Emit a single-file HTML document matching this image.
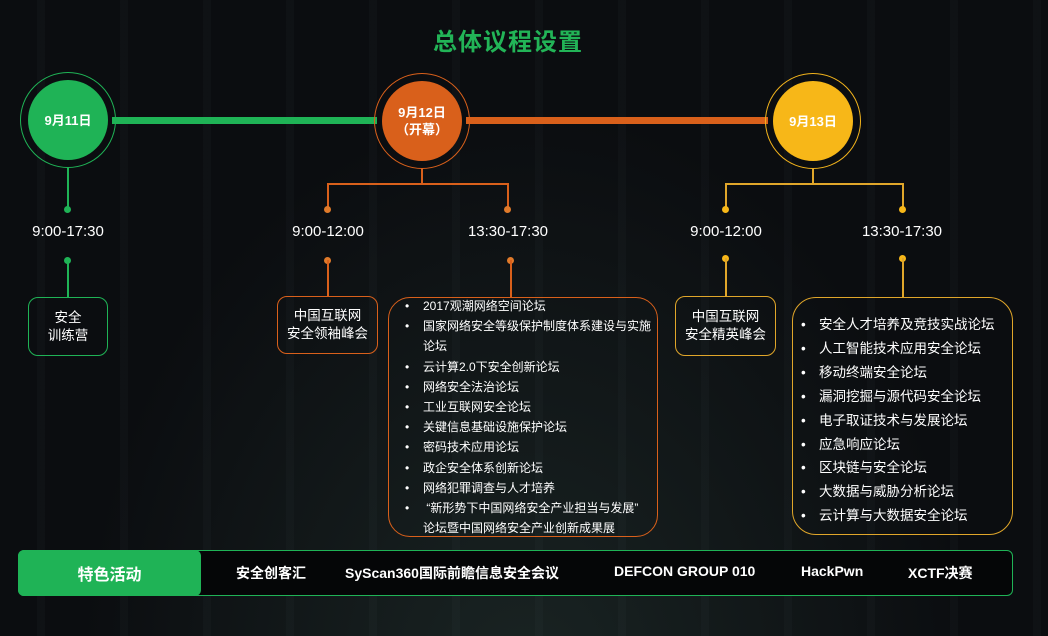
<!DOCTYPE html>
<html><head><meta charset="utf-8"><style>
*{margin:0;padding:0;box-sizing:border-box}
body{width:1048px;height:636px;overflow:hidden;background:#0b0d10;font-family:"Liberation Sans","Noto Sans CJK SC",sans-serif;color:#fff;position:relative}
.bg{position:absolute;inset:0;background:
repeating-linear-gradient(90deg,rgba(255,255,255,0.0) 0 37px,rgba(120,140,150,0.035) 37px 45px,rgba(255,255,255,0) 45px 83px),
radial-gradient(ellipse at 50% 110%,rgba(60,90,80,0.3),rgba(0,0,0,0) 60%),#0b0d10}
.a{position:absolute}
.title{left:0;width:1016px;top:22px;text-align:center;font-size:24px;font-weight:bold;color:#22b457;letter-spacing:1px}
.circ{position:absolute;border-radius:50%;display:flex;align-items:center;justify-content:center;text-align:center;font-weight:bold;font-size:13px;line-height:17px}
.ring{position:absolute;border-radius:50%;border:1.5px solid}
.t{position:absolute;font-size:15px;width:120px;text-align:center}
.box{position:absolute;border:1.5px solid;border-radius:10px;font-size:13.5px;line-height:18px;text-align:center;display:flex;align-items:center;justify-content:center}
.dot{position:absolute;width:7px;height:7px;border-radius:50%}
ul{list-style:none}
li{position:relative;padding-left:26px}
li:before{content:"•";position:absolute;left:8px}
.ob li{padding-left:34px}
.ob li:before{left:16px}
</style></head><body><div class="bg"></div>
<div class="a title">总体议程设置</div>

<div class="a" style="left:112px;top:117px;width:265px;height:7px;background:#1fb356"></div>
<div class="a" style="left:466px;top:117px;width:302px;height:7px;background:#d9601b"></div>

<div class="ring" style="left:20px;top:72px;width:96px;height:96px;border-color:#1fb356"></div>
<div class="circ" style="left:28px;top:80px;width:80px;height:80px;background:#1fb356">9月11日</div>
<div class="ring" style="left:374px;top:73px;width:96px;height:96px;border-color:#d9601b"></div>
<div class="circ" style="left:382px;top:81px;width:80px;height:80px;background:#d9601b">9月12日<br>（开幕）</div>
<div class="ring" style="left:765px;top:73px;width:96px;height:96px;border-color:#f2b31c"></div>
<div class="circ" style="left:773px;top:81px;width:80px;height:80px;background:#f7b718">9月13日</div>

<div class="a" style="left:67px;top:168px;width:1.5px;height:42px;background:#1fb356"></div>
<div class="dot" style="left:64px;top:206px;background:#1fb356"></div>
<div class="t" style="left:8px;top:223px">9:00-17:30</div>
<div class="dot" style="left:64px;top:257px;background:#1fb356"></div>
<div class="a" style="left:67px;top:260px;width:1.5px;height:37px;background:#1fb356"></div>
<div class="box" style="left:28px;top:297px;width:80px;height:59px;border-color:#1fb356">安全<br>训练营</div>

<div class="a" style="left:421px;top:168px;width:1.5px;height:16px;background:#d9601b"></div>
<div class="a" style="left:327px;top:183px;width:181px;height:1.5px;background:#d9601b"></div>
<div class="a" style="left:327px;top:183px;width:1.5px;height:26px;background:#d9601b"></div>
<div class="a" style="left:507px;top:183px;width:1.5px;height:26px;background:#d9601b"></div>
<div class="dot" style="left:324px;top:206px;background:#e07a2a"></div>
<div class="dot" style="left:504px;top:206px;background:#e07a2a"></div>
<div class="t" style="left:268px;top:223px">9:00-12:00</div>
<div class="t" style="left:448px;top:223px">13:30-17:30</div>
<div class="dot" style="left:324px;top:257px;background:#e07a2a"></div>
<div class="dot" style="left:507px;top:257px;background:#e07a2a"></div>
<div class="a" style="left:327px;top:260px;width:1.5px;height:36px;background:#d9601b"></div>
<div class="a" style="left:510px;top:260px;width:1.5px;height:37px;background:#d9601b"></div>
<div class="box" style="left:277px;top:296px;width:101px;height:58px;border-color:#d9601b">中国互联网<br>安全领袖峰会</div>
<div class="box ob" style="left:388px;top:297px;width:270px;height:240px;border-color:#d9601b;border-radius:22px;display:block;text-align:left;font-size:12px;line-height:20.2px;white-space:nowrap">
<ul style="margin-top:-2px">
<li>2017观潮网络空间论坛</li>
<li>国家网络安全等级保护制度体系建设与实施<br>论坛</li>
<li>云计算2.0下安全创新论坛</li>
<li>网络安全法治论坛</li>
<li>工业互联网安全论坛</li>
<li>关键信息基础设施保护论坛</li>
<li>密码技术应用论坛</li>
<li>政企安全体系创新论坛</li>
<li>网络犯罪调查与人才培养</li>
<li>&nbsp;“新形势下中国网络安全产业担当与发展”<br>论坛暨中国网络安全产业创新成果展</li>
</ul></div>

<div class="a" style="left:812px;top:168px;width:1.5px;height:16px;background:#e0a62a"></div>
<div class="a" style="left:725px;top:183px;width:178px;height:1.5px;background:#e0a62a"></div>
<div class="a" style="left:725px;top:183px;width:1.5px;height:26px;background:#e0a62a"></div>
<div class="a" style="left:902px;top:183px;width:1.5px;height:26px;background:#e0a62a"></div>
<div class="dot" style="left:722px;top:206px;background:#f7b718"></div>
<div class="dot" style="left:899px;top:206px;background:#f7b718"></div>
<div class="t" style="left:666px;top:223px">9:00-12:00</div>
<div class="t" style="left:842px;top:223px">13:30-17:30</div>
<div class="dot" style="left:722px;top:255px;background:#f7b718"></div>
<div class="dot" style="left:899px;top:255px;background:#f7b718"></div>
<div class="a" style="left:725px;top:258px;width:1.5px;height:38px;background:#e0a62a"></div>
<div class="a" style="left:902px;top:258px;width:1.5px;height:39px;background:#e0a62a"></div>
<div class="box" style="left:675px;top:296px;width:101px;height:60px;border-color:#e0a62a">中国互联网<br>安全精英峰会</div>
<div class="box" style="left:792px;top:297px;width:221px;height:238px;border-color:#e0a62a;border-radius:24px;display:block;text-align:left;font-size:13.5px;line-height:23.9px;padding-top:15px">
<ul>
<li>安全人才培养及竞技实战论坛</li>
<li>人工智能技术应用安全论坛</li>
<li>移动终端安全论坛</li>
<li>漏洞挖掘与源代码安全论坛</li>
<li>电子取证技术与发展论坛</li>
<li>应急响应论坛</li>
<li>区块链与安全论坛</li>
<li>大数据与威胁分析论坛</li>
<li>云计算与大数据安全论坛</li>
</ul></div>

<div class="a" style="left:18px;top:550px;width:995px;height:46px;border:1.5px solid #1fb356;border-radius:6px;background:#050607"></div>
<div class="a" style="left:18px;top:550px;width:183px;height:46px;background:#1fb356;border-radius:6px;font-size:16px;font-weight:bold;display:flex;align-items:center;justify-content:center">特色活动</div>
<div class="a" style="top:563px;font-size:14px;font-weight:bold;left:236px">安全创客汇</div>
<div class="a" style="top:563px;font-size:14px;font-weight:bold;left:345px">SyScan360国际前瞻信息安全会议</div>
<div class="a" style="top:563px;font-size:14px;font-weight:bold;left:614px">DEFCON GROUP 010</div>
<div class="a" style="top:563px;font-size:14px;font-weight:bold;left:801px">HackPwn</div>
<div class="a" style="top:563px;font-size:14px;font-weight:bold;left:908px">XCTF决赛</div>
</body></html>
